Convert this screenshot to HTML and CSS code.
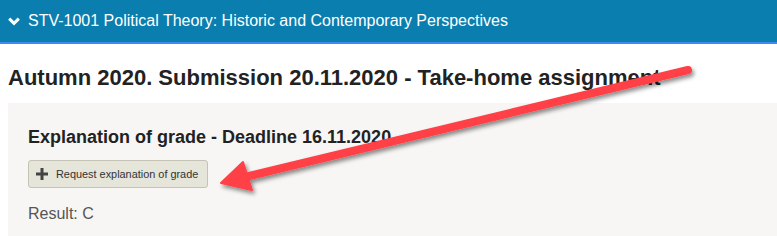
FILE: index.html
```html
<!DOCTYPE html>
<html>
<head>
  <title>STV-1001 - Submission</title>
  <link rel="stylesheet" href="styles.css">
</head>
<body>
  <!-- Course header -->
  <div class="course-bar">
    <svg class="chevron" width="12" height="9" viewBox="0 0 12 9"><path d="M1.2 1.6 L6 6.4 L10.8 1.6" fill="none" stroke="#fff" stroke-width="3"/></svg>
    <span>STV-1001 Political Theory: Historic and Contemporary Perspectives</span>
  </div>

  <h1 class="term-title">Autumn 2020. Submission 20.11.2020 - Take-home assignment</h1>

  <div class="grade-box">
    <h2>Explanation of grade - Deadline 16.11.2020</h2>
    <button class="request-btn">
      <svg class="plus" width="12" height="12" viewBox="0 0 12 12"><path d="M4.5 0h3v4.5H12v3H7.5V12h-3V7.5H0v-3h4.5z" fill="#444"/></svg>
      Request explanation of grade
    </button>
    <p class="result">Result: C</p>
  </div>

  <!-- annotation arrow -->
  <svg class="arrow" width="777" height="236" viewBox="0 0 777 236">
    <defs>
      <filter id="sh" x="-10%" y="-10%" width="130%" height="140%">
        <feDropShadow dx="2" dy="3" stdDeviation="2" flood-color="#000" flood-opacity="0.45"/>
      </filter>
    </defs>
    <g filter="url(#sh)" fill="#ff4046" stroke="#ff4046">
      <line x1="688" y1="70" x2="245" y2="177" stroke-width="8" stroke-linecap="round"/>
      <path d="M221 183 L243 162 L252 190 Z" stroke-width="2" stroke-linejoin="round"/>
    </g>
  </svg>
</body>
</html>
```

FILE: styles.css
```css
body {
  margin: 0;
  font-family: "Liberation Sans", Arial, sans-serif;
  background: #fff;
  color: #222;
  width: 777px;
  height: 236px;
  overflow: hidden;
  position: relative;
}

.course-bar {
  height: 42px;
  background: #0a7eae;
  border-bottom: 2px solid #3d8bf0;
  color: #fff;
  display: flex;
  align-items: center;
  padding-left: 8px;
  font-size: 16px;
}

.chevron {
  margin-right: 8px;
  margin-top: 1px;
}

.term-title {
  margin: 21px 0 0 8px;
  font-size: 22px;
  line-height: 25px;
  font-weight: bold;
  color: #222;
  height: 38px;
}

.grade-box {
  margin-left: 8px;
  background: #f7f6f4;
  padding: 24px 20px 0 20px;
  height: 133px;
  box-sizing: border-box;
}

.grade-box h2 {
  margin: 0 0 12px 0;
  font-size: 18px;
  line-height: 21px;
  font-weight: bold;
  color: #222;
}

.request-btn {
  display: flex;
  align-items: center;
  gap: 8px;
  height: 28px;
  width: 180px;
  padding: 0 0 0 7px;
  background: #e6e5da;
  border: 1px solid #c4c3b6;
  border-radius: 3px;
  font-family: "Liberation Sans", Arial, sans-serif;
  font-size: 10.9px;
  white-space: nowrap;
  color: #333;
}

.plus {
  flex-shrink: 0;
}

.result {
  margin: 17px 0 0 0;
  font-size: 16px;
  line-height: 18px;
  color: #555;
}

.arrow {
  position: absolute;
  left: 0;
  top: 0;
  pointer-events: none;
}
```
